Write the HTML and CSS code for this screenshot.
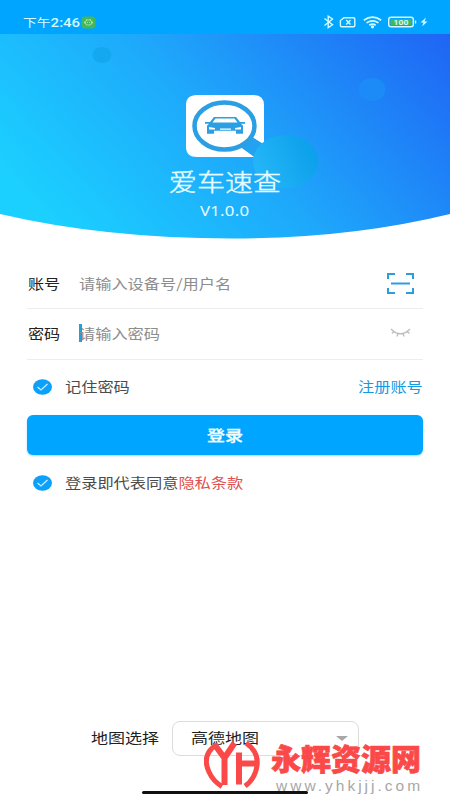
FILE: index.html
```html
<!DOCTYPE html>
<html lang="zh-CN">
<head>
<meta charset="utf-8">
<title>爱车速查</title>
<link rel="stylesheet" href="styles.css">
</head>
<body>
<main class="screen">
  <header class="status">
    <span class="wide clock">下午<b>2:46</b></span>
    <svg class="droid" width="15" height="13" viewBox="0 0 15 13"><rect x=".5" y=".5" width="14" height="12" rx="3.5" fill="#43b75c"/><g fill="none" stroke="#b9efb0" stroke-width=".8"><rect x="4.500" y="4" width="6" height="5" rx="2"/><path d="M3.500 5.500v2M11.500 5.500v2M5 3l1 1M10 3L9 4M6 6.500h1M8 6.500h1"/></g></svg>
    <svg class="tray" width="106" height="14" viewBox="0 0 106 14" fill="none" stroke="#d4faff" stroke-width="1.4">
      <path d="M1.500 3.500l8 6.300-4.300 2.800V1.200L9.500 4l-8 6.500"/>
      <path d="M21 2.700h9.500q1.300 0 1.300 1.200v6.700q0 1.200-1.300 1.200H18.700q-1.300 0-1.300-1.200V5.500z"/><path d="M23.200 5l4.300 4.500M27.500 5l-4.300 4.500"/>
      <path stroke-width="1.700" d="M40.800 5.200q8.700-6.200 17.400 0M43.500 7.900q6-4.200 12 0M46.300 10.300q3.200-2.200 6.400 0"/><circle cx="49.500" cy="11.800" r=".9" fill="#d4faff"/>
      <rect x="65.700" y="2.200" width="24.600" height="9.600" rx="2.300"/><rect x="67.500" y="4" width="21" height="6" rx="1" fill="#43b75c" stroke="none"/><path d="M92.500 5.500v3"/>
      <text x="70.500" y="9.700" textLength="15" lengthAdjust="spacingAndGlyphs" class="charge">100</text>
      <path d="M103 2.500l-5.500 5h3l-1.500 4 5.500-5h-3z" fill="#d4faff" stroke="none"/>
    </svg>
  </header>
  <section class="hero">
    <svg class="hero-bg" width="450" height="205" viewBox="0 0 450 205">
      <defs>
        <linearGradient id="sky" gradientUnits="userSpaceOnUse" x1="70" y1="212" x2="385" y2="-75"><stop offset="0" stop-color="#1bd0ff"/><stop offset=".45" stop-color="#1ea8fb"/><stop offset="1" stop-color="#1f64f4"/></linearGradient>
        <linearGradient id="bubble" x1="0" y1=".7" x2="1" y2=".3"><stop offset="0" stop-color="#25b7f7"/><stop offset="1" stop-color="#0b9feb"/></linearGradient>
      </defs>
      <path d="M0 0H450V180Q350 204.500 232 204.500Q105 204.500 0 180Z" fill="url(#sky)"/>
      <ellipse cx="102" cy="21" rx="9.500" ry="8" fill="#14a9ee"/>
      <ellipse cx="372" cy="55.500" rx="13.500" ry="11.500" fill="#1c8bf8"/>
    </svg>
    <svg class="logo" width="134" height="96" viewBox="0 0 134 96">
      <path d="M12 0H68Q79 0 79 10V49.500L67 42 57 53 70 62H12Q1 62 1 52V10Q1 0 12 0Z" fill="#fff"/>
      <path d="M57 53L66 41.500 79.500 50V56L70 62.500Z" fill="#22a2f1"/>
      <ellipse cx="39.500" cy="31" rx="30" ry="23.500" fill="#fff" stroke="#2b9fe4" stroke-width="4.500"/>
      <g fill="#2b9fe4"><path d="M25 27l4-5h22l4 5h5v1.800h-4l2 2v8h-7v-3H29v3h-7v-8l2-2h-4V27z"/><path d="M30.500 23.500h19l3 4h-25z" fill="#fff"/><path d="M24 32l6 1v1.500h-6zM56 32l-6 1v1.500h6zM35 33.500h11v1.200H35z" fill="#fff"/></g>
      <ellipse cx="100.500" cy="66.500" rx="32.500" ry="26.500" fill="url(#bubble)"/>
    </svg>
    <h1 class="wide title">爱车速查</h1>
    <p class="wide version">V1.0.0</p>
  </section>
  <section class="form">
    <div class="field first">
      <span class="label"><span class="wide">账号</span></span><span class="wide hint">请输入设备号/用户名</span>
      <svg class="scan" width="27" height="21" viewBox="0 0 27 21" fill="none" stroke="#2c9ddd" stroke-width="2"><path d="M1 6V1h7M19 1h7v5M26 15v5h-7M8 20H1v-5M4 10.500h19"/></svg>
    </div>
    <div class="field">
      <span class="label"><span class="wide">密码</span></span><i class="caret"></i><span class="wide hint">请输入密码</span>
      <svg class="eye" width="21" height="10" viewBox="0 0 21 10" fill="none" stroke="#bdbdbd" stroke-width="1.300"><path d="M1 1q9.500 9.500 19 0M4 3.300L2 5.500M8 5L7 8.500M13 5l1 3.500M17 3.300l2.500 2.200"/></svg>
    </div>
    <div class="option remember">
      <svg class="check" width="19" height="16" viewBox="0 0 19 16"><ellipse cx="9.500" cy="8" rx="9.500" ry="7.700" fill="#0da0f8"/><path d="M4.500 8l3.500 3 6.500-6" fill="none" stroke="#c5f3ff" stroke-width="1.200"/></svg>
      <span class="wide">记住密码</span><a class="wide register">注册账号</a>
    </div>
    <button class="login"><span class="wide">登录</span></button>
    <div class="option">
      <svg class="check" width="19" height="16" viewBox="0 0 19 16"><ellipse cx="9.500" cy="8" rx="9.500" ry="7.700" fill="#0da0f8"/><path d="M4.500 8l3.500 3 6.500-6" fill="none" stroke="#c5f3ff" stroke-width="1.200"/></svg>
      <span class="wide">登录即代表同意<a class="privacy">隐私条款</a></span>
    </div>
  </section>
  <footer class="map">
    <span class="map-label"><span class="wide">地图选择</span></span>
    <div class="select"><span class="wide">高德地图</span><i class="arrow"></i></div>
  </footer>
  <div class="homebar"></div>
  <div class="watermark">
    <svg width="56" height="48" viewBox="0 0 56 48" fill="none" stroke="#fa4948" stroke-width="6"><path stroke-width="5" d="M12.500 3.500Q-3 14 5 31Q9 40 18 45.500"/><path d="M10.500 3.500L20.500 17 30.500 2M20.500 15.500V44M35 11.500V43.500M35 22.500H52"/><path stroke-width="5" d="M42 2Q55 11 53 25Q51 38 41 45"/></svg>
    <div class="brand"><strong>永辉资源网</strong><span>www.yhkjjj.com</span></div>
  </div>
</main>
</body>
</html>
```
FILE: styles.css
```css
* { box-sizing: border-box; }
body { margin: 0; background: #fff; font-family: "Noto Sans CJK SC", sans-serif; }
.screen { position: relative; display: flex; flex-direction: column; width: 450px; height: 800px; overflow: hidden; font-size: 13.4px; color: #222; }
.wide { display: inline-block; transform: scaleX(1.2); transform-origin: left center; white-space: nowrap; line-height: 20px; }

.status { display: flex; align-items: center; height: 34px; padding: 10px 21px 0 23px; background: #00a5ff; color: #d4faff; }
.clock { width: 58px; font-size: 11.5px; line-height: 16px; }
.clock b { font-family: Roboto, sans-serif; font-weight: 500; font-size: 12.5px; }
.tray { margin-left: auto; }
.charge { font: bold 7px Roboto, sans-serif; fill: #d4faff; stroke: none; }

.hero { position: relative; display: flex; flex-direction: column; align-items: center; height: 205px; padding-top: 61px; color: #e8fdff; }
.hero-bg { position: absolute; left: 0; top: 0; }
.logo { position: relative; flex: none; margin: 0 -54px 0 0; }
.title { position: relative; margin: -27px 0 0; font-size: 24px; font-weight: 300; line-height: 34px; transform: scaleX(1.17); transform-origin: center; -webkit-text-stroke: .4px #e8fdff; }
.version { position: relative; margin: 3px 0 0; font-family: "Noto Sans", sans-serif; font-size: 14px; letter-spacing: .2px; transform-origin: center; }

.form { padding: 0 27px; }
.field { display: flex; align-items: center; height: 51px; border-bottom: 1px solid #ededed; padding: 0 0 2px 1px; }
.first { height: 70px; padding-top: 20px; }
.label { width: 51px; }
.hint { color: #8d8d8d; font-size: 13.5px; }
.caret { width: 3px; height: 18px; margin-right: -3px; background: #239fdc; }
.scan { margin: 2px 9px 0 auto; }
.eye { margin: 0 12px 0 auto; }
.option { display: flex; align-items: center; height: 55px; padding-left: 6px; color: #4b4b4b; }
.remember { padding-bottom: 2px; }
.option .wide { margin-top: -1px; font-size: 13.5px; }
.check { margin-right: 13px; }
.register { width: 65px; margin-left: auto; color: #149bdf; }
.login { display: block; width: 396px; height: 40px; padding: 0; border: 0; border-radius: 6px; background: #00a5ff; box-shadow: 0 1px 2px #9cd8ff; color: #f3ffff; font: 500 15px "Noto Sans CJK SC", sans-serif; }
.login .wide { position: relative; top: -1px; transform-origin: center; -webkit-text-stroke: .3px #f3ffff; }
.privacy { color: #e0504e; }

.map { display: flex; align-items: center; height: 36px; margin: 210px 0 0 91px; color: #1f1f1f; font-size: 14.2px; }
.map .wide { position: relative; top: -1px; }
.map-label { width: 81px; }
.select { display: flex; align-items: center; justify-content: space-between; width: 187px; height: 35px; padding: 0 10px 0 18px; border: 1px solid #dcdcdc; border-radius: 8px; }
.arrow { border: 6px solid transparent; border-top: 5px solid #a8a8a8; border-bottom: 0; }
.homebar { position: absolute; left: 142px; top: 791px; width: 166px; height: 3px; border-radius: 2px; background: #111; }
.watermark { position: absolute; left: 204px; top: 741px; display: flex; }
.brand { margin-left: 11px; }
.brand strong { display: block; width: 152px; margin-top: 3px; color: #fa4948; font-size: 30px; font-weight: 900; line-height: 27px; white-space: nowrap; -webkit-text-stroke: .7px #fa4948; }
.brand span { display: block; margin: 6px 0 0 5px; color: #a7a7a7; font: 15.5px/17px "Liberation Sans", sans-serif; letter-spacing: 3px; }
```
